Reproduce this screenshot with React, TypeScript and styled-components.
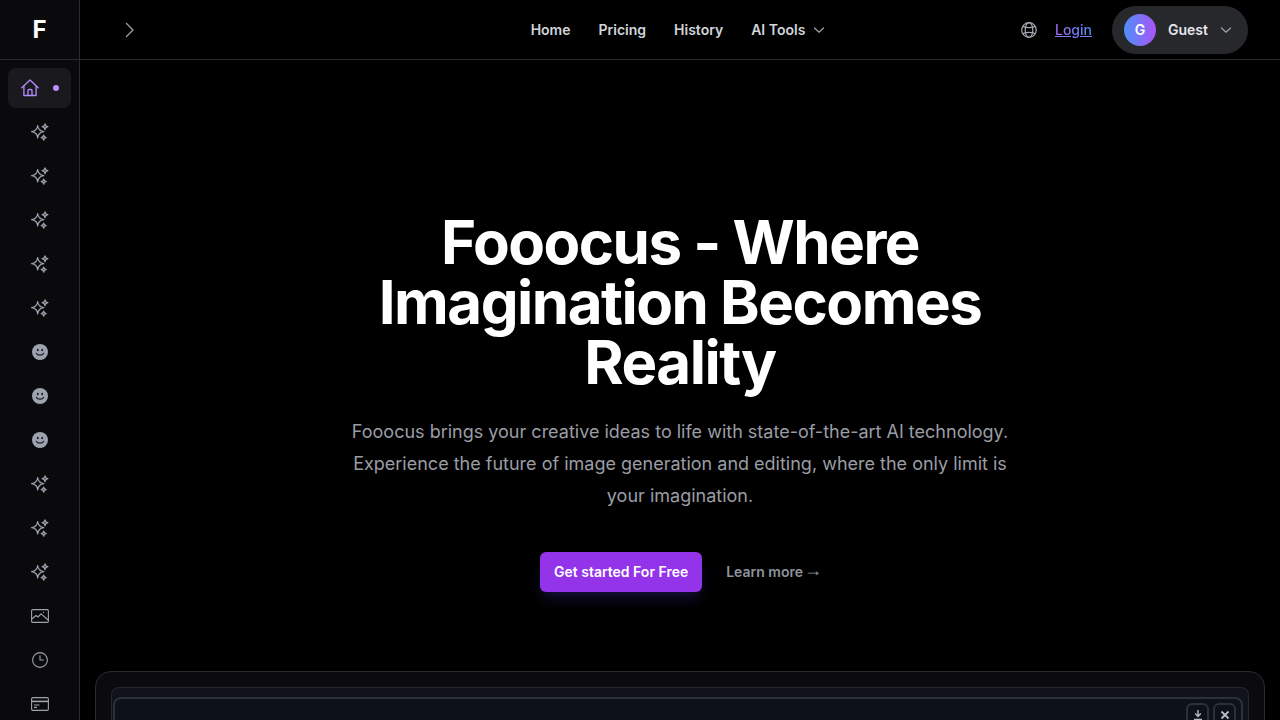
import React from "react";
import styled, { createGlobalStyle } from "styled-components";

const GlobalStyle = createGlobalStyle`
  html, body {
    margin: 0;
    padding: 0;
    height: 100%;
    background: #000;
    overflow: hidden;
    font-family: Inter, "Liberation Sans", sans-serif;
  }
  * { box-sizing: border-box; }
`;

const Layout = styled.div`
  display: flex;
  width: 1280px;
  height: 720px;
  overflow: hidden;
  background: #000;
`;

const Sidebar = styled.aside`
  flex: 0 0 80px;
  display: flex;
  flex-direction: column;
  background: #0a0a0c;
  border-right: 1px solid #2a2b2e;
`;

const Brand = styled.div`
  height: 60px;
  flex: 0 0 60px;
  display: flex;
  align-items: center;
  justify-content: center;
  border-bottom: 1px solid #2a2b2e;
  color: #fff;
  font-size: 24px;
  font-weight: 700;
`;

const SideNav = styled.nav`
  display: flex;
  flex-direction: column;
  gap: 4px;
  padding: 8px;
`;

const SideItem = styled.div<{ $active?: boolean }>`
  position: relative;
  height: 40px;
  flex: 0 0 40px;
  display: flex;
  align-items: center;
  justify-content: center;
  border-radius: 8px;
  color: #9ca3af;
  background: ${(p) => (p.$active ? "#1a1a1e" : "transparent")};
`;

const HomeIcon = styled.span`
  display: flex;
  color: #b18cfa;
  margin-right: 20px;
`;

const ActiveDot = styled.span`
  position: absolute;
  right: 12px;
  top: 17px;
  width: 6px;
  height: 6px;
  border-radius: 50%;
  background: #b88ef9;
`;

const Main = styled.main`
  flex: 1;
  min-width: 0;
  display: flex;
  flex-direction: column;
`;

const Header = styled.header`
  height: 60px;
  flex: 0 0 60px;
  display: grid;
  grid-template-columns: 1fr auto 1fr;
  align-items: center;
  padding: 0 32px 0 28px;
  border-bottom: 1px solid #2a2b2e;
`;

const Toggle = styled.div`
  display: flex;
  color: #9ca3af;
  margin-left: 12px;
`;

const TopNav = styled.nav`
  display: flex;
  align-items: center;
  gap: 28px;
`;

const NavLink = styled.a`
  display: flex;
  align-items: center;
  gap: 8px;
  color: #d1d5db;
  font-size: 14px;
  font-weight: 600;
  line-height: 20px;
`;

const ChevronWrap = styled.span`
  display: flex;
  color: #9ca3af;
`;

const HeaderRight = styled.div`
  display: flex;
  align-items: center;
  justify-content: flex-end;
`;

const GlobeWrap = styled.span`
  display: flex;
  color: #a3a8b2;
  margin-right: 18px;
`;

const Login = styled.a`
  font-size: 14px;
  font-weight: 500;
  line-height: 20px;
  color: transparent;
  background: linear-gradient(90deg, #a566f5, #4f8ef7);
  -webkit-background-clip: text;
  background-clip: text;
  text-decoration: underline;
  text-decoration-color: #7b7cf6;
  margin-right: 20px;
`;

const UserPill = styled.div`
  display: flex;
  align-items: center;
  width: 136px;
  height: 48px;
  padding: 0 12px;
  border-radius: 24px;
  background: #27282c;
`;

const Avatar = styled.span`
  width: 32px;
  height: 32px;
  border-radius: 50%;
  display: flex;
  align-items: center;
  justify-content: center;
  color: #fff;
  font-size: 14px;
  font-weight: 600;
  background: linear-gradient(90deg, #4f8ef7, #a855f7);
  margin-right: 12px;
`;

const UserName = styled.span`
  color: #e5e7eb;
  font-size: 14px;
  font-weight: 600;
  margin-right: 12px;
`;

const Hero = styled.section`
  display: flex;
  flex-direction: column;
  align-items: center;
  padding-top: 152px;
  text-align: center;
`;

const Title = styled.h1`
  margin: 0;
  width: 672px;
  color: #fff;
  font-size: 60px;
  font-weight: 700;
  line-height: 60px;
  letter-spacing: -1.5px;
`;

const Lead = styled.p`
  margin: 24px 0 0;
  width: 672px;
  color: #9a9da5;
  font-size: 18px;
  line-height: 32px;
`;

const Actions = styled.div`
  display: flex;
  align-items: center;
  gap: 24px;
  margin-top: 40px;
`;

const Primary = styled.a`
  height: 40px;
  padding: 0 14px 2px;
  display: flex;
  align-items: center;
  border-radius: 6px;
  background: #9333ea;
  color: #fff;
  font-size: 14px;
  font-weight: 600;
  box-shadow: 0 10px 15px -3px rgba(38, 30, 105, 0.45), 0 4px 6px -4px rgba(38, 30, 105, 0.45);
`;

const Secondary = styled.a`
  display: flex;
  align-items: center;
  color: #8f939c;
  font-size: 14px;
  font-weight: 600;
  line-height: 24px;
`;

const Arrow = styled.span`
  font-family: "Liberation Sans", sans-serif;
  font-size: 18px;
  font-weight: 400;
  line-height: 20px;
  margin-left: 1px;
  margin-right: -2px;
  padding-bottom: 4px;
`;

const Showcase = styled.div`
  margin: 79px 15px 0;
  height: 200px;
  flex: 0 0 200px;
  padding: 15px;
  border: 1px solid #2a2b2e;
  border-radius: 16px;
  background: #0b0b0e;
`;

const ShowcaseInner = styled.div`
  height: 100%;
  padding: 9px 5px 0 1px;
  border: 1px solid #26282e;
  border-radius: 8px;
  background: #10131b;
`;

const Frame = styled.div`
  position: relative;
  height: 100%;
  border: 2px solid #2e3037;
  border-radius: 8px;
  background: #0d1119;
`;

const FrameTools = styled.div`
  position: absolute;
  top: 4px;
  right: 5px;
  display: flex;
  gap: 4px;
`;

const FrameButton = styled.span`
  width: 23px;
  height: 24px;
  display: flex;
  align-items: center;
  justify-content: center;
  border: 2px solid #2e3037;
  border-radius: 6px;
  color: #b8bcc4;
`;

const Sparkles = () => (
  <svg width="20" height="20" viewBox="0 0 20 20" fill="none" stroke="currentColor" strokeWidth="1.2" strokeLinejoin="round">
    <path d="M7.7 3.6 Q8.4 8.9 13.8 9.7 Q8.4 10.5 7.7 15.8 Q7 10.5 1.6 9.7 Q7 8.9 7.7 3.6 Z" />
    <path d="M15 1.8 Q15.4 4.3 17.9 4.7 Q15.4 5.1 15 7.6 Q14.6 5.1 12.1 4.7 Q14.6 4.3 15 1.8 Z" fill="currentColor" fillOpacity="0.45" />
    <path d="M13.7 13.2 Q14 15.4 16.2 15.7 Q14 16 13.7 18.2 Q13.4 16 11.2 15.7 Q13.4 15.4 13.7 13.2 Z" fill="currentColor" fillOpacity="0.45" />
  </svg>
);

const Smile = () => (
  <svg width="16" height="16" viewBox="0 0 16 16">
    <circle cx="8" cy="8" r="8" fill="currentColor" />
    <ellipse cx="5.8" cy="6" rx="0.9" ry="1.2" fill="#1a1b20" />
    <ellipse cx="10.2" cy="6" rx="0.9" ry="1.2" fill="#1a1b20" />
    <path d="M4.4 9.4 C5.4 11.6 10.6 11.6 11.6 9.4" fill="none" stroke="#1a1b20" strokeWidth="1.2" strokeLinecap="round" />
  </svg>
);

const Home = () => (
  <svg width="18" height="18" viewBox="0 0 18 18" fill="none" stroke="currentColor" strokeWidth="1.3" strokeLinejoin="round">
    <path d="M0.8 8.8 L9 1 L17.2 8.8" strokeLinecap="round" />
    <path d="M2.9 7 V16.5 H15.1 V7" />
    <path d="M7 16.5 V11.5 Q7 10.5 8 10.5 H10 Q11 10.5 11 11.5 V16.5" />
  </svg>
);

const ImageIcon = () => (
  <svg width="18" height="14" viewBox="0 0 18 14" fill="none" stroke="currentColor" strokeWidth="1.1" strokeLinejoin="round">
    <rect x="0.6" y="0.6" width="16.8" height="12.8" rx="1.2" />
    <path d="M0.8 10 L5 6.5 L7 8 L10 4.8 L17.2 11" />
    <circle cx="12.5" cy="3.4" r="0.7" fill="currentColor" stroke="none" />
  </svg>
);

const Clock = () => (
  <svg width="16" height="16" viewBox="0 0 16 16" fill="none" stroke="currentColor" strokeWidth="1.1" strokeLinecap="round" strokeLinejoin="round">
    <circle cx="8" cy="8" r="7.4" />
    <path d="M8 3.8 V8 H11.4" />
  </svg>
);

const Card = () => (
  <svg width="18" height="14" viewBox="0 0 18 14" fill="none" stroke="currentColor" strokeWidth="1.1">
    <rect x="0.6" y="0.6" width="16.8" height="12.8" rx="1.4" />
    <path d="M0.6 4.4 H17.4" strokeWidth="1.6" />
    <path d="M3 8 H8.5 M3 10.4 H6" strokeWidth="1.2" />
  </svg>
);

const Chevron = () => (
  <svg width="12" height="12" viewBox="0 0 12 12" fill="none" stroke="currentColor" strokeWidth="1.2" strokeLinecap="round" strokeLinejoin="round">
    <path d="M1.5 4 L6 8.2 L10.5 4" />
  </svg>
);

const ChevronRight = () => (
  <svg width="20" height="20" viewBox="0 0 20 20" fill="none" stroke="currentColor" strokeWidth="1.3" strokeLinecap="round" strokeLinejoin="round">
    <path d="M6.5 3.5 L13 10 L6.5 16.5" />
  </svg>
);

const Globe = () => (
  <svg width="16" height="16" viewBox="0 0 16 16" fill="none" stroke="currentColor" strokeWidth="1.2">
    <circle cx="8" cy="8" r="7.3" />
    <ellipse cx="8" cy="8" rx="3.8" ry="7.3" />
    <path d="M1.8 4.4 Q8 7 14.2 4.4 M1.8 11.6 Q8 9 14.2 11.6" />
  </svg>
);

const Download = () => (
  <svg width="12" height="12" viewBox="0 0 12 12" fill="none" stroke="currentColor" strokeWidth="1.4">
    <path d="M6 1 V7 M3.2 4.6 L6 7.4 L8.8 4.6 M2 10.4 H10" />
  </svg>
);

const Close = () => (
  <svg width="12" height="12" viewBox="0 0 12 12" fill="none" stroke="currentColor" strokeWidth="1.8">
    <path d="M2.5 2.5 L9.5 9.5 M9.5 2.5 L2.5 9.5" />
  </svg>
);

const sideItems = [
  Sparkles, Sparkles, Sparkles, Sparkles, Sparkles,
  Smile, Smile, Smile,
  Sparkles, Sparkles, Sparkles,
  ImageIcon, Clock, Card,
];

const App = () => {
  return (
    <Layout>
      <GlobalStyle />
      <Sidebar>
        <Brand>F</Brand>
        <SideNav>
          <SideItem $active>
            <HomeIcon>
              <Home />
            </HomeIcon>
            <ActiveDot />
          </SideItem>
          {sideItems.map((Icon, i) => (
            <SideItem key={i}>
              <Icon />
            </SideItem>
          ))}
        </SideNav>
      </Sidebar>
      <Main>
        <Header>
          <Toggle>
            <ChevronRight />
          </Toggle>
          <TopNav>
            <NavLink>Home</NavLink>
            <NavLink>Pricing</NavLink>
            <NavLink>History</NavLink>
            <NavLink>
              AI Tools
              <ChevronWrap>
                <Chevron />
              </ChevronWrap>
            </NavLink>
          </TopNav>
          <HeaderRight>
            <GlobeWrap>
              <Globe />
            </GlobeWrap>
            <Login>Login</Login>
            <UserPill>
              <Avatar>G</Avatar>
              <UserName>Guest</UserName>
              <ChevronWrap>
                <Chevron />
              </ChevronWrap>
            </UserPill>
          </HeaderRight>
        </Header>
        <Hero>
          <Title>Fooocus - Where Imagination Becomes Reality</Title>
          <Lead>
            Fooocus brings your creative ideas to life with state-of-the-art AI
            technology. Experience the future of image generation and editing,
            where the only limit is your imagination.
          </Lead>
          <Actions>
            <Primary>Get started For Free</Primary>
            <Secondary>
              Learn more<Arrow>→</Arrow>
            </Secondary>
          </Actions>
        </Hero>
        <Showcase>
          <ShowcaseInner>
            <Frame>
              <FrameTools>
                <FrameButton>
                  <Download />
                </FrameButton>
                <FrameButton>
                  <Close />
                </FrameButton>
              </FrameTools>
            </Frame>
          </ShowcaseInner>
        </Showcase>
      </Main>
    </Layout>
  );
};

export default App;
